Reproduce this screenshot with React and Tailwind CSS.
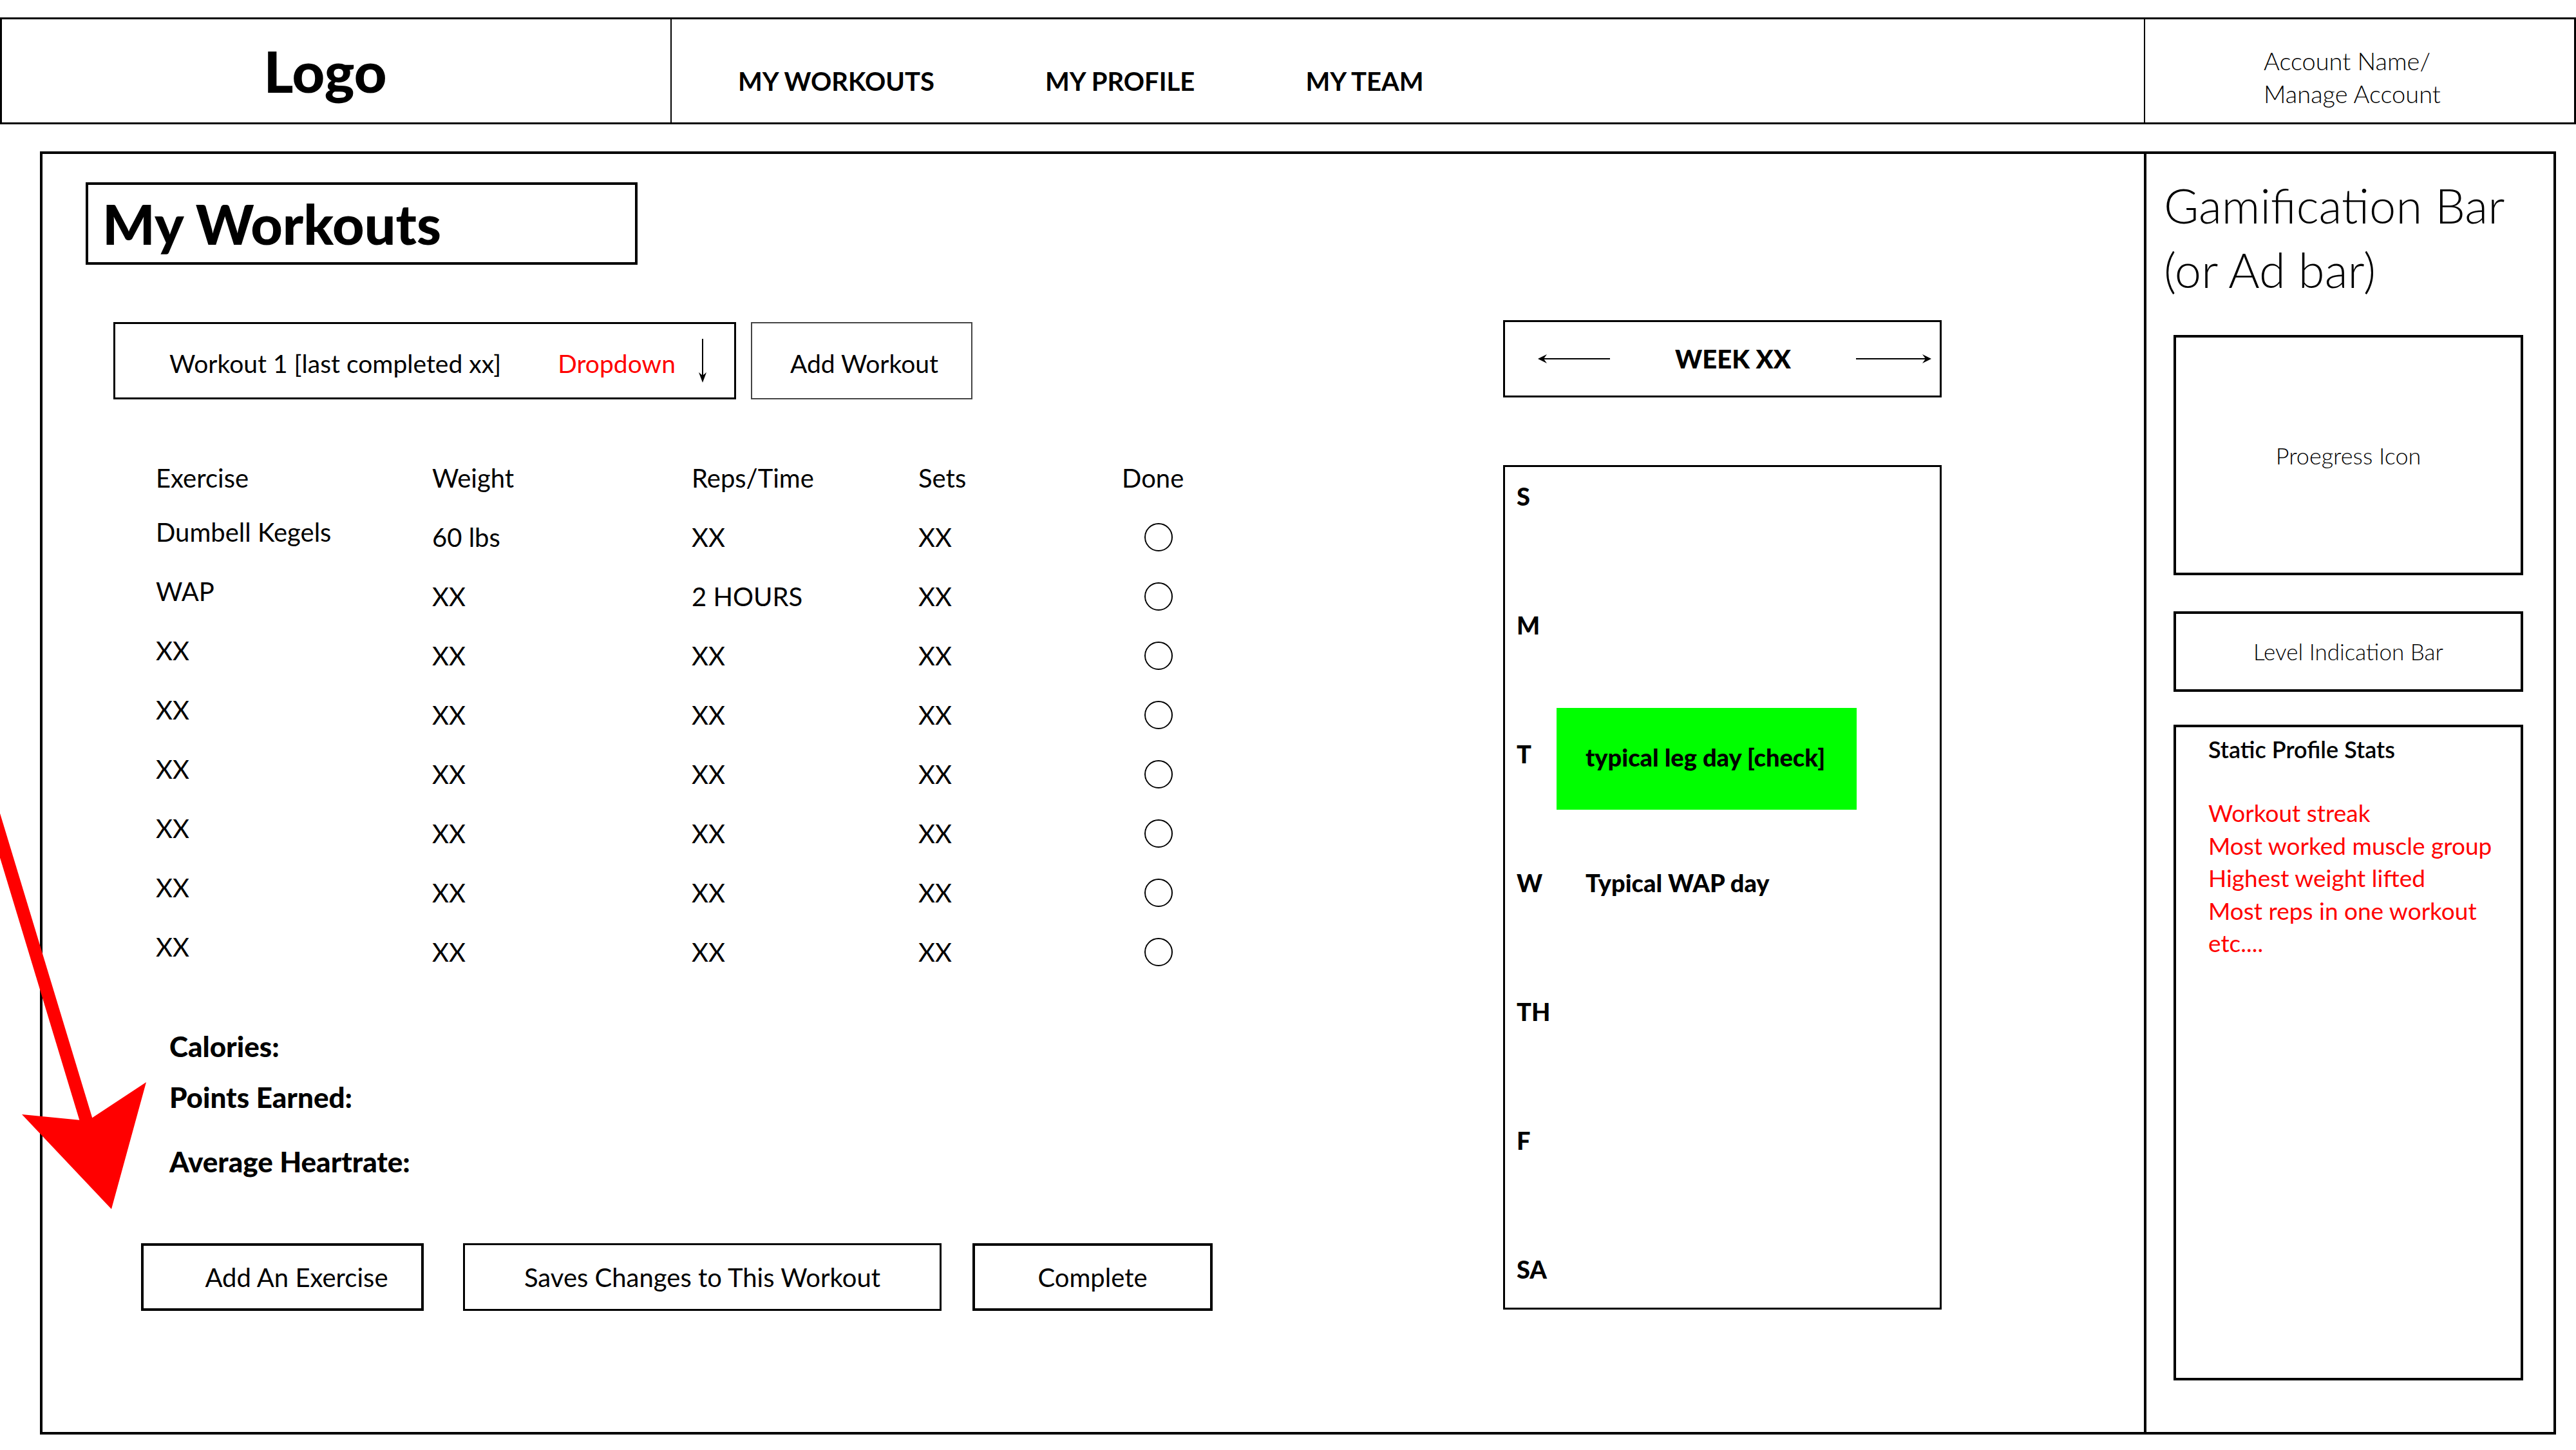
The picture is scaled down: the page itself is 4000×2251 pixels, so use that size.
import React from 'react'

const ROWS = [
  ['Dumbell Kegels', '60 lbs', 'XX', 'XX'],
  ['WAP', 'XX', '2 HOURS', 'XX'],
  ['XX', 'XX', 'XX', 'XX'],
  ['XX', 'XX', 'XX', 'XX'],
  ['XX', 'XX', 'XX', 'XX'],
  ['XX', 'XX', 'XX', 'XX'],
  ['XX', 'XX', 'XX', 'XX'],
  ['XX', 'XX', 'XX', 'XX'],
]

const DAYS = ['S', 'M', 'T', 'W', 'TH', 'F', 'SA']

function ArrowLeft() {
  return (
    <svg width="112" height="20" viewBox="0 0 112 20" aria-hidden>
      <path d="M112 10H6" stroke="#000" strokeWidth="2" />
      <path d="M0 10 L14 3 L9 10 L14 17 Z" fill="#000" />
    </svg>
  )
}

function ArrowRight() {
  return (
    <svg width="117" height="20" viewBox="0 0 117 20" aria-hidden>
      <path d="M0 10H110" stroke="#000" strokeWidth="2" />
      <path d="M117 10 L103 3 L108 10 L103 17 Z" fill="#000" />
    </svg>
  )
}

function ArrowDown() {
  return (
    <svg width="16" height="68" viewBox="0 0 16 68" aria-hidden>
      <path d="M8 0V60" stroke="#000" strokeWidth="2" />
      <path d="M8 68 L2 52 L8 57 L14 52 Z" fill="#000" />
    </svg>
  )
}

function Header() {
  return (
    <header className="mt-[27px] h-[166px] w-[4000px] border-[3px] border-black flex">
      <div className="w-[1040px] h-full border-r-2 border-black flex items-center justify-center pr-[34px]">
        <span className="text-[88px] font-black leading-none">Logo</span>
      </div>
      <nav className="w-[2286px] h-full flex items-center gap-[172px] pl-[103px] pt-[32px] text-[40px] font-bold leading-none">
        <span>MY WORKOUTS</span>
        <span>MY PROFILE</span>
        <span>MY TEAM</span>
      </nav>
      <div className="flex-1 h-full border-l-2 border-black pl-[184px] pt-[39px] text-[38px] font-light leading-[51px]">
        <div>Account Name/</div>
        <div>Manage Account</div>
      </div>
    </header>
  )
}

function WorkoutTable() {
  return (
    <div className="ml-[176px] mt-[76px] text-[40px] leading-[48px]">
      <div className="grid grid-cols-[429px_403px_352px_316px_140px] h-[92px] items-center">
        <span>Exercise</span>
        <span>Weight</span>
        <span>Reps/Time</span>
        <span>Sets</span>
        <span>Done</span>
      </div>
      {ROWS.map((r, i) => (
        <div key={i} className="grid grid-cols-[429px_403px_352px_316px_140px] h-[92px] items-center">
          <span className="-translate-y-[8px]">{r[0]}</span>
          <span>{r[1]}</span>
          <span>{r[2]}</span>
          <span>{r[3]}</span>
          <span className="ml-[35px] w-[44px] h-[44px] rounded-full border-2 border-black" />
        </div>
      ))}
    </div>
  )
}

function WorkoutColumn() {
  return (
    <div className="w-[2268px] flex flex-col">
      <div className="ml-[67px] mt-[44px] w-[857px] h-[128px] border-4 border-black flex items-center pl-[22px]">
        <h1 className="text-[86px] font-black leading-none">My Workouts</h1>
      </div>

      <div className="mt-[89px] ml-[110px] flex gap-[23px] text-[39px] leading-[48px]">
        <div className="w-[967px] h-[120px] border-[3px] border-black flex items-center pl-[84px] pt-[8px]">
          <span>Workout 1 [last completed xx]</span>
          <span className="ml-[88px] text-[#ff0000]">Dropdown</span>
          <span className="ml-[34px] -mt-[8px]"><ArrowDown /></span>
        </div>
        <button className="w-[344px] h-[120px] border-2 border-[#444] flex items-center justify-center pt-[8px] pl-[8px]">
          Add Workout
        </button>
      </div>

      <WorkoutTable />

      <div className="ml-[197px] mt-[76px] text-[44px] font-black leading-[48px]">
        <div>Calories:</div>
        <div className="mt-[31px]">Points Earned:</div>
        <div className="mt-[52px]">Average Heartrate:</div>
      </div>

      <div className="ml-[153px] mt-[103px] flex items-center text-[40px] leading-[48px]">
        <button className="w-[439px] h-[105px] border-4 border-black flex items-center justify-center pl-[44px]">
          Add An Exercise
        </button>
        <button className="ml-[61px] w-[743px] h-[105px] border-[3px] border-black flex items-center justify-center">
          Saves Changes to This Workout
        </button>
        <button className="ml-[48px] w-[373px] h-[105px] border-4 border-black flex items-center justify-center">
          Complete
        </button>
      </div>
    </div>
  )
}

function WeekColumn() {
  return (
    <div className="w-[681px] flex flex-col mt-[258px]">
      <div className="h-[120px] border-[3px] border-black flex items-center justify-between pl-[51px] pr-[13px]">
        <ArrowLeft />
        <span className="text-[40px] font-black leading-none">WEEK XX</span>
        <ArrowRight />
      </div>
      <div className="mt-[105px] h-[1311px] border-[3px] border-black pt-[25px] pl-[18px] flex flex-col gap-[160px] text-[38px] font-black leading-[40px]">
        {DAYS.map((d) => (
          <div key={d} className="h-[40px] flex items-center">
            <span className="w-[62px]">{d}</span>
            {d === 'T' && (
              <div className="-mt-[51px] -mb-[67px] w-[466px] h-[158px] bg-[#00ff00] flex items-center pl-[45px] pb-[6px]">
                typical leg day [check]
              </div>
            )}
            {d === 'W' && <span className="pl-[45px]">Typical WAP day</span>}
          </div>
        ))}
      </div>
    </div>
  )
}

function Sidebar() {
  return (
    <aside className="flex-1 border-l-4 border-black flex flex-col pt-[30px]">
      <div className="pl-[27px] text-[74px] font-light leading-[100px]">
        <div>Gamification Bar</div>
        <div>(or Ad bar)</div>
      </div>
      <div className="ml-[42px] mt-[51px] w-[543px] h-[373px] border-4 border-black flex items-center justify-center text-[36px] font-light">
        Proegress Icon
      </div>
      <div className="ml-[42px] mt-[56px] w-[543px] h-[125px] border-4 border-black flex items-center justify-center text-[35px] font-light">
        Level Indication Bar
      </div>
      <div className="ml-[42px] mt-[51px] w-[543px] h-[1018px] border-4 border-black pl-[50px] pt-[12px]">
        <div className="text-[36px] font-semibold leading-[44px]">Static Profile Stats</div>
        <ul className="mt-[52px] text-[37px] text-[#ff0000] leading-[50.5px]">
          <li>Workout streak</li>
          <li>Most worked muscle group</li>
          <li>Highest weight lifted</li>
          <li>Most reps in one workout</li>
          <li>etc....</li>
        </ul>
      </div>
    </aside>
  )
}

function RedArrow() {
  return (
    <svg
      className="absolute left-0 top-0 pointer-events-none"
      width="4000"
      height="2251"
      viewBox="0 0 4000 2251"
      aria-hidden
    >
      <path d="M-10 1264 L136 1746" stroke="#ff0000" strokeWidth="20" fill="none" />
      <path d="M34 1730 L136 1740 L227 1680 L173 1877 Z" fill="#ff0000" />
    </svg>
  )
}

export default function App() {
  return (
    <div className="relative w-[4000px] h-[2251px] bg-white text-black overflow-hidden font-['Lato',sans-serif]">
      <Header />
      <main className="mt-[42px] ml-[62px] w-[3907px] h-[1992px] border-4 border-black flex">
        <div className="w-[3263px] flex">
          <WorkoutColumn />
          <WeekColumn />
        </div>
        <Sidebar />
      </main>
      <RedArrow />
    </div>
  )
}
